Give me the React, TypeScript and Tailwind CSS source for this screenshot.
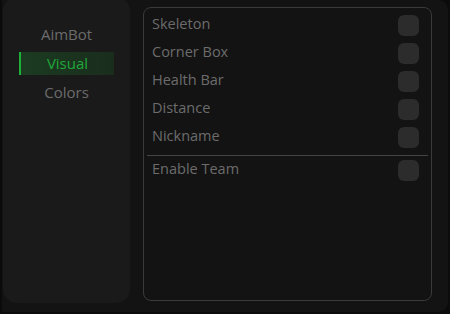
const tabs = ["AimBot", "Visual", "Colors"];
const options = ["Skeleton", "Corner Box", "Health Bar", "Distance", "Nickname"];

function Check() {
  return <div className="size-[21px] rounded-[6px] bg-[#2c2c2c] shrink-0" />;
}

function Row({ label }: { label: string }) {
  return (
    <div className="flex items-center justify-between h-[28px] pl-[8px] pr-[12px]">
      <span className="mb-[3px] text-[14.5px]">{label}</span>
      <Check />
    </div>
  );
}

export default function App() {
  return (
    <div
      className="w-[450px] h-[314px] bg-[#0b0b0b] overflow-hidden text-[14px] text-[#6c6c6c]"
      style={{ fontFamily: '"Open Sans", "Noto Sans", sans-serif' }}
    >
      <div className="ml-[2px] w-[446px] h-[312px] rounded-r-[10px] bg-[#131313] flex overflow-hidden">
        <div className="w-[127px] h-[306px] -mt-[3px] ml-[1px] rounded-[14px] bg-[#1a1a1a] pt-[26px] flex flex-col gap-[6px]">
          {tabs.map((t) =>
            t === "Visual" ? (
              <div
                key={t}
                className="mx-[16px] h-[23px] flex items-center justify-center border-l-2 border-[#1fb03a] bg-gradient-to-r from-[#1b3b21] to-[#1a2d1d] text-[#20a83a] text-[15px]"
              >
                {t}
              </div>
            ) : (
              <div key={t} className="mx-[16px] h-[23px] flex items-center justify-center text-[15px]">
                {t}
              </div>
            )
          )}
        </div>
        <div className="ml-[13px] mt-[7px] w-[289px] h-[294px] border border-[#3a3a3a] rounded-[8px] pt-[3px]">
          {options.map((o) => (
            <Row key={o} label={o} />
          ))}
          <div className="mt-[4px] mx-[3px] h-px bg-[#454545]" />
          <Row label="Enable Team" />
        </div>
      </div>
    </div>
  );
}
